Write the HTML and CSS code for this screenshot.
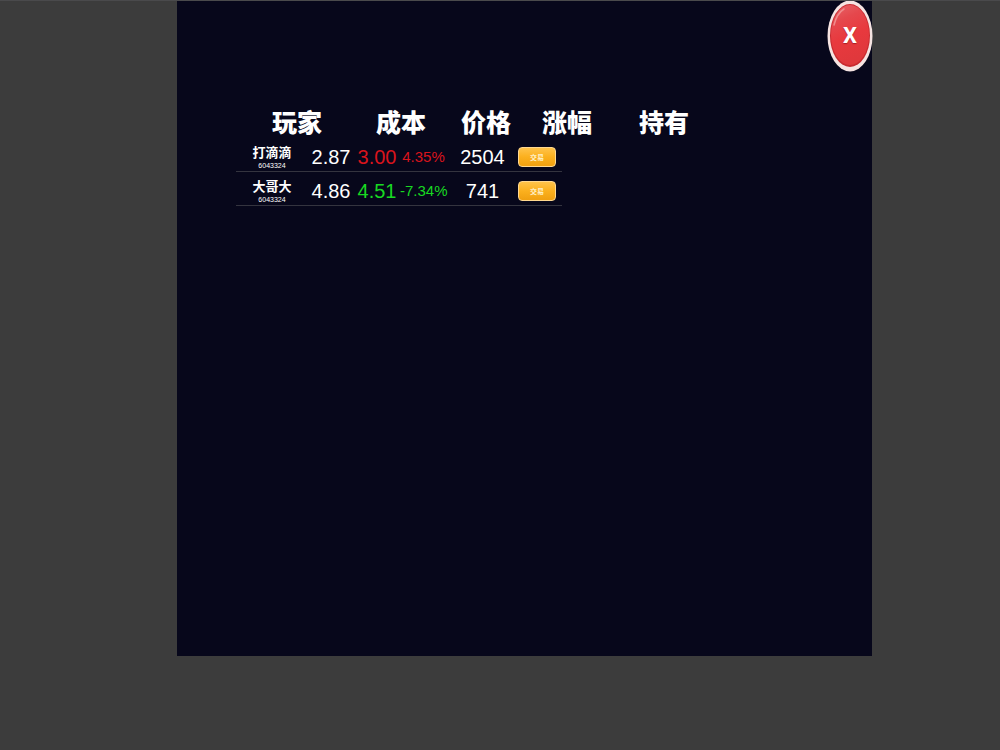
FILE: index.html
```html
<!DOCTYPE html>
<html lang="zh-CN">
<head>
<meta charset="utf-8">
<meta name="viewport" content="width=device-width, initial-scale=1">
<title>交易</title>
<link rel="stylesheet" href="styles.css">
</head>
<body class="stage">
<main class="panel">
  <button class="close" type="button" aria-label="X">
    <svg class="close-art" viewBox="0 0 46 72" aria-hidden="true">
      <defs>
        <linearGradient id="red" x1="0" y1="0" x2="0.3" y2="1">
          <stop offset="0" stop-color="#e8666a"/>
          <stop offset="0.3" stop-color="#e5484d"/>
          <stop offset="0.6" stop-color="#e8393e"/>
          <stop offset="1" stop-color="#e0383c"/>
        </linearGradient>
      </defs>
      <ellipse cx="23" cy="36" rx="22.5" ry="35.5" fill="#f6e4e2"/>
      <ellipse cx="23" cy="35.5" rx="20" ry="31.5" fill="#c92a2f"/>
      <ellipse cx="23" cy="35" rx="19" ry="30" fill="url(#red)"/>
      <path d="M7 25C9 17 12 12 17 9" fill="none" stroke="#f08c8c" stroke-width="1.5" stroke-linecap="round"/>
    </svg>
    <span class="close-label">X</span>
  </button>
  <table class="board">
    <thead>
      <tr class="head">
        <th scope="col">玩家</th><th scope="col">成本</th><th scope="col">价格</th><th scope="col">涨幅</th><th scope="col">持有</th>
      </tr>
    </thead>
    <tbody>
      <tr class="row">
        <td class="player"><span class="name">打滴滴</span><span class="id">6043324</span></td>
        <td>2.87</td>
        <td class="up">3.00</td>
        <td class="change up">4.35%</td>
        <td class="held">2504</td>
        <td class="action"><button class="trade" type="button">交易</button></td>
      </tr>
      <tr class="row">
        <td class="player"><span class="name">大哥大</span><span class="id">6043324</span></td>
        <td>4.86</td>
        <td class="down">4.51</td>
        <td class="change down">-7.34%</td>
        <td class="held">741</td>
        <td class="action"><button class="trade" type="button">交易</button></td>
      </tr>
    </tbody>
  </table>
</main>
</body>
</html>
```
FILE: styles.css
```css
* { box-sizing: border-box; }

.stage {
  margin: 0;
  min-height: 100vh;
  background: #3c3c3c;
  border-top: 1px solid #4a4a4c;
  color: #fff;
  font-family: "Liberation Sans", "Noto Sans CJK SC", sans-serif;
}

.panel {
  position: relative;
  width: 69.5%;
  min-height: 87.3vh;
  margin-left: 17.7%;
  padding: 102px 16px 24px 59px;
  background: #07071b;
}

.close {
  position: absolute;
  top: -1px;
  right: -1px;
  display: grid;
  place-items: center;
  width: 46px;
  height: 72px;
  padding: 0;
  border: 0;
  background: none;
  color: #fff;
  cursor: pointer;
}
.close-art, .close-label { grid-area: 1 / 1; }
.close-art { width: 46px; height: 72px; }
.close-label {
  font: bold 22px/24px Roboto, "Liberation Sans", sans-serif;
  text-shadow: 0 1px 1px #a82024;
}

.board, .board thead, .board tbody { display: block; }
.board th, .board td { padding: 0; text-align: center; white-space: nowrap; }

.head {
  display: grid;
  grid-template-columns: 122px 86px 84px 78px 116px;
  height: 35px;
  align-items: center;
}
.head th {
  font: 900 25px/36px "Noto Sans CJK SC", sans-serif;
}

.row {
  display: grid;
  grid-template-columns: 72px 46px 46px 47px 71px 44px;
  width: 326px;
  height: 34px;
  padding-top: 4px;
  align-items: center;
  border-bottom: 1px solid #34343f;
  font-size: 20px;
  line-height: 28px;
}
.player { display: flex; flex-direction: column; }
.name { font: bold 13px/18px "Noto Sans CJK SC", sans-serif; }
.id { font-size: 7px; line-height: 9px; }
.row .change { font-size: 15px; }
.row .held { font-size: 20px; }
.up { color: #d9141c; }
.down { color: #18d822; }

.action { display: flex; }
.trade {
  width: 38px;
  height: 20px;
  padding: 0;
  border: 1px solid #ffd890;
  border-radius: 4px;
  background: linear-gradient(#ffc34a, #fbb01e 50%, #f0a010);
  color: #fff0c8;
  font: bold 7px/16px "Noto Sans CJK SC", sans-serif;
  cursor: pointer;
}
```
